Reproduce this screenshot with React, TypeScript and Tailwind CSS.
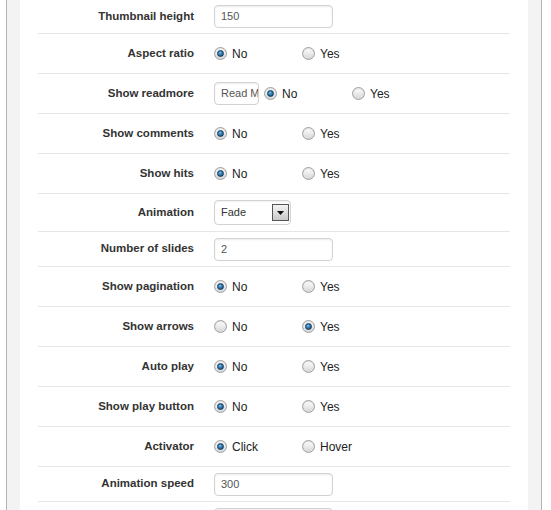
import type { ReactNode } from 'react';

type RowKind = 'input' | 'radio' | 'select';

function Radio({ checked }: { checked?: boolean }) {
  return (
    <span className="relative inline-flex h-[13px] w-[13px] shrink-0 items-center justify-center rounded-full border border-[#a0a0a0] bg-gradient-to-b from-[#ffffff] to-[#d6d6d6] shadow-[inset_0_1px_1px_rgba(0,0,0,0.12)]">
      {checked && (
        <span className="h-[7px] w-[7px] rounded-full border border-[#123b5a] bg-[radial-gradient(circle_at_40%_35%,#7cc0ec_0%,#2d79b0_45%,#123f63_100%)]" />
      )}
    </span>
  );
}

function RadioGroup({ options, value }: { options: string[]; value: number }) {
  return (
    <div className="flex items-center">
      {options.map((opt, i) => (
        <label key={opt} className="flex w-[88px] items-center gap-[5px] text-[12px] text-[#222]">
          <Radio checked={i === value} />
          <span>{opt}</span>
        </label>
      ))}
    </div>
  );
}

function TextBox({ value, width = 'w-[119px]' }: { value: string; width?: string }) {
  return (
    <div
      className={`${width} flex h-[23px] items-center overflow-hidden whitespace-nowrap rounded-[4px] border border-[#d2d2d2] bg-white px-[6px] text-[11px] text-[#555] shadow-[inset_0_1px_2px_rgba(0,0,0,0.08)]`}
    >
      {value}
    </div>
  );
}

function Select({ value }: { value: string }) {
  return (
    <div className="flex h-[25px] w-[77px] items-center justify-between rounded-[4px] border border-[#d2d2d2] bg-white pl-[6px] pr-[1px] text-[11px] text-[#333] shadow-[inset_0_1px_2px_rgba(0,0,0,0.06)]">
      <span>{value}</span>
      <span className="flex h-[17px] w-[17px] items-center justify-center border border-[#555] bg-gradient-to-b from-[#f4f4f4] to-[#c9c9c9]">
        <svg width="7" height="4" viewBox="0 0 7 4">
          <path d="M0 0h7L3.5 4z" fill="#111" />
        </svg>
      </span>
    </div>
  );
}

function Row({ label, kind, h, children }: { label: string; kind: RowKind; h: string; children: ReactNode }) {
  return (
    <div className={`${h} flex items-center border-b border-[#e6e6e6]`} data-kind={kind}>
      <div className="w-[156px] text-right text-[11.5px] font-bold text-[#333]">{label}</div>
      <div className="ml-[20px] flex items-center">{children}</div>
    </div>
  );
}

export default function App() {
  return (
    <div className="h-[510px] overflow-hidden bg-white pl-[6px] pr-[9px]" style={{ fontFamily: '"Liberation Sans", Arial, sans-serif' }}>
      <div className="h-full border-x border-[#b4b4b4] bg-[#f3f3f3] px-[13px]">
        <div className="h-full bg-white px-[18px]">
          <Row label="Thumbnail height" kind="input" h="h-[34px]">
            <TextBox value="150" />
          </Row>
          <Row label="Aspect ratio" kind="radio" h="h-[40px]">
            <RadioGroup options={['No', 'Yes']} value={0} />
          </Row>
          <Row label="Show readmore" kind="radio" h="h-[40px]">
            <TextBox value="Read More" width="w-[45px] px-[5px]" />
            <div className="ml-[5px]">
              <RadioGroup options={['No', 'Yes']} value={0} />
            </div>
          </Row>
          <Row label="Show comments" kind="radio" h="h-[40px]">
            <RadioGroup options={['No', 'Yes']} value={0} />
          </Row>
          <Row label="Show hits" kind="radio" h="h-[40px]">
            <RadioGroup options={['No', 'Yes']} value={0} />
          </Row>
          <Row label="Animation" kind="select" h="h-[38px]">
            <Select value="Fade" />
          </Row>
          <Row label="Number of slides" kind="input" h="h-[35px]">
            <TextBox value="2" />
          </Row>
          <Row label="Show pagination" kind="radio" h="h-[40px]">
            <RadioGroup options={['No', 'Yes']} value={0} />
          </Row>
          <Row label="Show arrows" kind="radio" h="h-[40px]">
            <RadioGroup options={['No', 'Yes']} value={1} />
          </Row>
          <Row label="Auto play" kind="radio" h="h-[40px]">
            <RadioGroup options={['No', 'Yes']} value={0} />
          </Row>
          <Row label="Show play button" kind="radio" h="h-[40px]">
            <RadioGroup options={['No', 'Yes']} value={0} />
          </Row>
          <Row label="Activator" kind="radio" h="h-[40px]">
            <RadioGroup options={['Click', 'Hover']} value={0} />
          </Row>
          <Row label="Animation speed" kind="input" h="h-[35px]">
            <TextBox value="300" />
          </Row>
          <Row label="" kind="input" h="h-[35px]">
            <TextBox value="" />
          </Row>
        </div>
      </div>
    </div>
  );
}
